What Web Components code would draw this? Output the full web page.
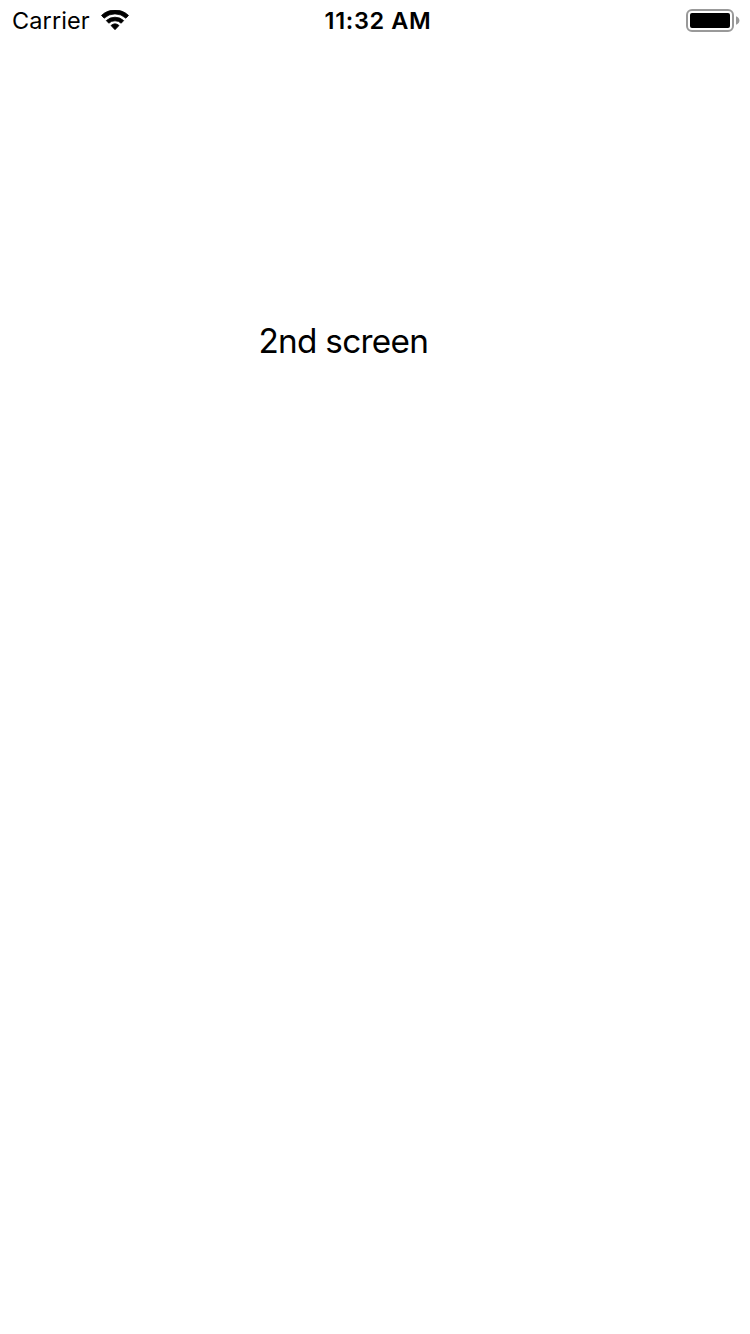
<!DOCTYPE html>
<html lang="en"><head><meta charset="utf-8"><title>2nd screen</title>
<style>html,body{margin:0;background:#fff}body{font-family:Inter,"Liberation Sans",sans-serif;color:#000}</style></head>
<body><app-screen><status-bar slot="status"><span slot="carrier">Carrier</span><span slot="time">11:32 AM</span></status-bar><screen-label>2nd screen</screen-label></app-screen>
<script>
const define=(name,html)=>customElements.define(name,class extends HTMLElement{constructor(){super();this.attachShadow({mode:'open'}).innerHTML=html;}});
define('wifi-icon',`<style>:host{display:block;width:30px;height:22px}svg{display:block}</style>
<svg width="30" height="22" viewBox="0 0 30 22" stroke="#000" stroke-width=".8" stroke-linejoin="round"><path d="M1.500 5.400A19.800 19.800 0 0 1 28.500 5.400L25.900 8.200A15.900 15.900 0 0 0 4.100 8.200ZM6.300 10.600A12.800 12.800 0 0 1 23.700 10.600L21.200 13.200A9.200 9.200 0 0 0 8.800 13.200ZM11 15.500A6.200 6.200 0 0 1 19 15.500L15 19.700Z"/></svg>`);
define('battery-icon',`<style>:host{display:block;width:54px;height:24px}svg{display:block}</style>
<svg width="54" height="24" viewBox="0 0 54 24"><rect x="1" y="1" width="46" height="21" rx="5" fill="none" stroke="#999" stroke-width="2"/><rect x="4" y="4" width="40" height="15" rx="2"/><path d="M50 7.200Q53.400 8.500 53.400 11.500T50 15.800Z" fill="#999"/></svg>`);
define('status-bar',`<style>:host{display:grid;grid-template-columns:1fr auto 1fr;align-items:center;height:42px;padding:0 10px 0 12px;font-size:23.5px;line-height:42px;white-space:nowrap}.left{display:flex;align-items:center}.carrier{width:88px;letter-spacing:.1px}.time{padding-left:4px;font-weight:600;letter-spacing:.65px}.right{justify-self:end}</style>
<div class="left"><span class="carrier"><slot name="carrier"></slot></span><wifi-icon></wifi-icon></div><div class="time"><slot name="time"></slot></div><battery-icon class="right"></battery-icon>`);
define('screen-label',`<style>:host{display:block;padding:278px 0 0 258.5px;font-size:33.3px;line-height:42px;letter-spacing:-.72px;white-space:nowrap}</style><slot></slot>`);
define('app-screen',`<style>:host{display:flex;flex-direction:column;width:750px;height:1334px;background:#fff;overflow:hidden}</style><slot name="status"></slot><main><slot></slot></main>`);
</script></body></html>
